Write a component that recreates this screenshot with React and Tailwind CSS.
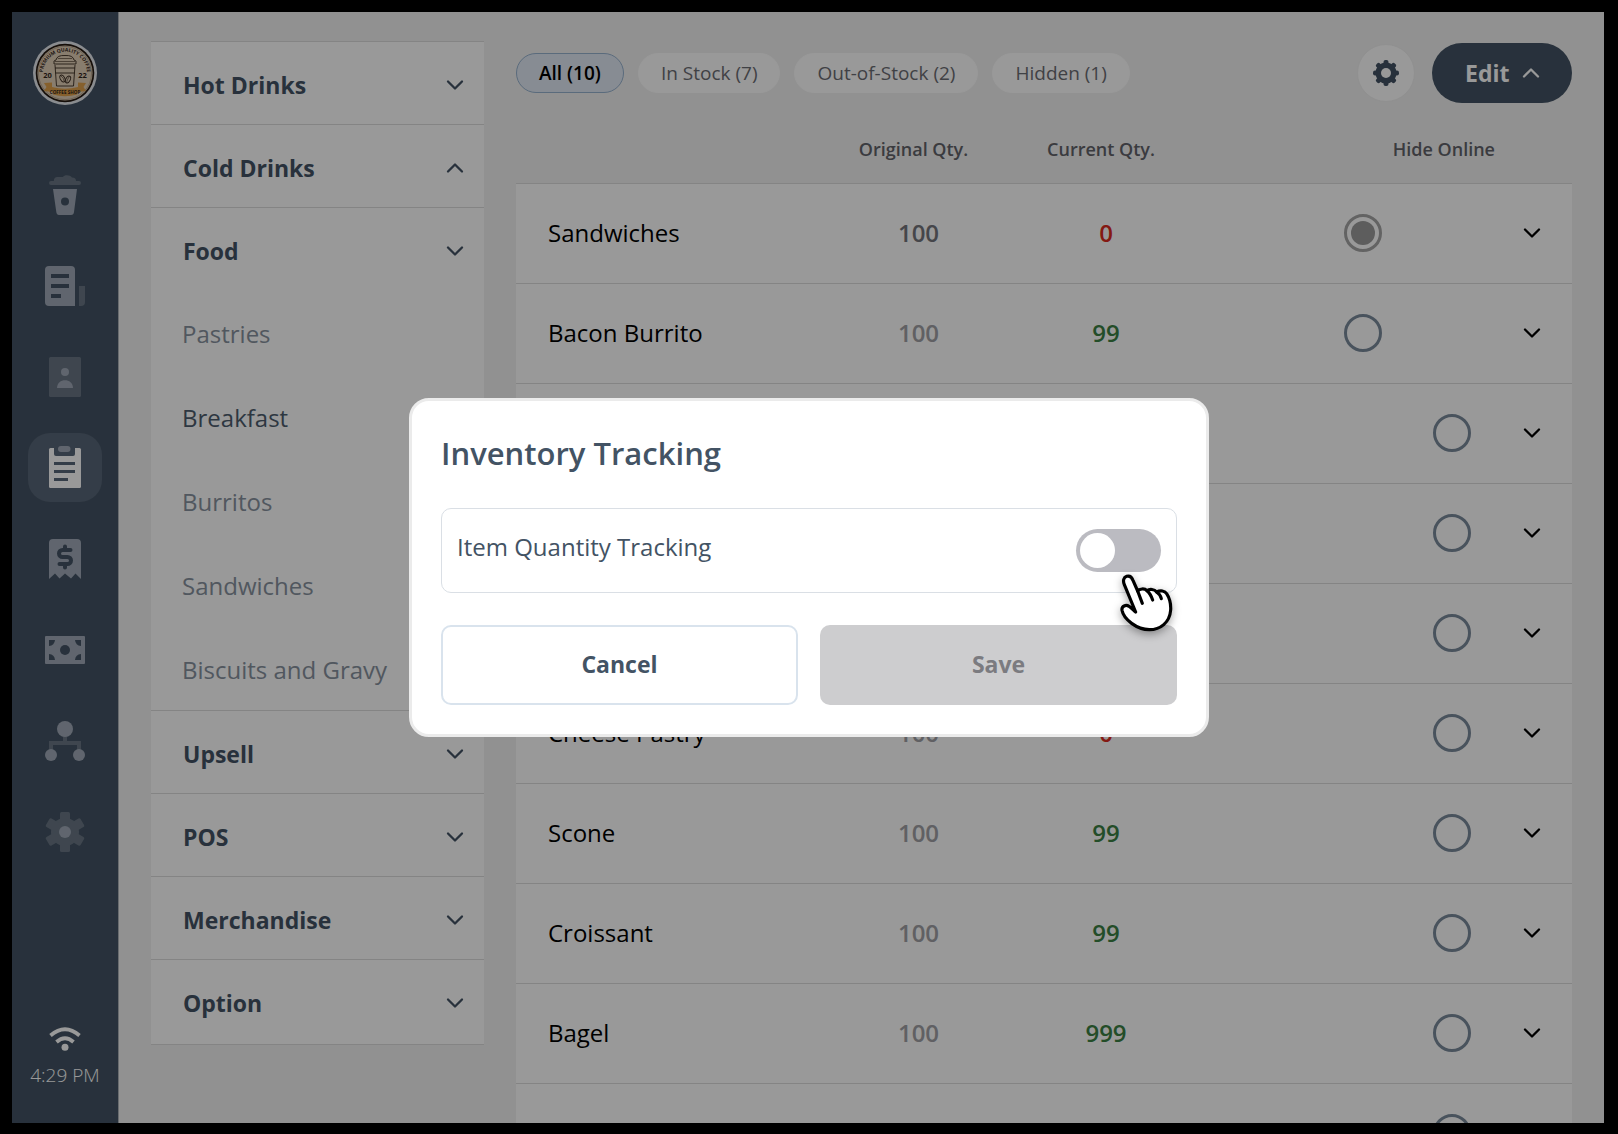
const FONT = 'font-["Open_Sans","Noto_Sans",sans-serif]';

const light = '#a0a9b7';
const dim = '#697684';
const navy = '#435364';

function NavIcon({ children }) {
  return (
    <svg viewBox="0 0 40 40" className="size-10 overflow-visible" aria-hidden="true">
      {children}
    </svg>
  );
}

const NAV = [
  {
    label: 'Orders',
    icon: (
      <NavIcon>
        <path d="M9 6 C8.500 3 11 1.500 14 2 H18 C19 -0.500 25 -0.500 27 2.500 C30 2.500 31 4 31 6 H34 a2 2 0 0 1 0 4 H6 a2 2 0 0 1 0 -4 Z" fill={dim} />
        <path d="M8 14 H32 L29 37 Q28.700 40 26 40 H14 Q11.700 40 11.300 37 Z" fill={light} />
        <circle cx="20" cy="26.500" r="4" fill={navy} />
      </NavIcon>
    ),
  },
  {
    label: 'Menu',
    icon: (
      <NavIcon>
        <path d="M34 20 H40 V36 Q40 40 36 40 H34 Z" fill={dim} />
        <path d="M4 0 H26 Q30 0 30 4 V40 H4 Q0 40 0 36 V4 Q0 0 4 0 Z" fill={light} />
        <path d="M6 8 H24 V12 H6 Z M6 18 H24 V22 H6 Z M6 28 H16 V32 H6 Z" fill={navy} />
      </NavIcon>
    ),
  },
  {
    label: 'Contacts',
    icon: (
      <NavIcon>
        <rect x="4" width="32" height="40" rx="1.500" fill={dim} />
        <circle cx="20" cy="15" r="4" fill={light} />
        <path d="M12 31 C12 20.500 28 20.500 28 31 Z" fill={light} />
      </NavIcon>
    ),
  },
  {
    label: 'Inventory',
    active: true,
    icon: (
      <NavIcon>
        <rect x="4" width="32" height="40" rx="1.500" fill="#fff" />
        <path d="M9 -1 H30 V6 Q30 8 28 8 H11 Q9 8 9 6 Z" fill="#586678" />
        <rect x="13" y="-2" width="12.500" height="6" rx="3" fill={light} />
        <path d="M9 14 H30 V17 H9 Z M9 22 H30 V25 H9 Z M9 30 H23 V33 H9 Z" fill="#586678" />
      </NavIcon>
    ),
  },
  {
    label: 'Receipts',
    icon: (
      <NavIcon>
        <path d="M8 0 H32 Q36 0 36 4 V40 L30.500 34.500 L26 39.500 L20 34.500 L14.500 39.500 L10 34.500 L4 40 V4 Q4 0 8 0 Z" fill={light} />
        <path d="M25.500 11 H17.500 a3.500 3.500 0 0 0 0 7 H22.500 a3.500 3.500 0 0 1 0 7 H14.500 M20 7.500 V11 M20 25 V28.500" fill="none" stroke={navy} strokeWidth="4" strokeLinecap="round" />
      </NavIcon>
    ),
  },
  {
    label: 'Cash',
    icon: (
      <NavIcon>
        <rect y="6" width="40" height="28" rx="1" fill={light} />
        <path d="M4 10 H10 Q9.500 15.500 4 16 Z M36 10 H30 Q30.500 15.500 36 16 Z M4 30 H10 Q9.500 24.500 4 24 Z M36 30 H30 Q30.500 24.500 36 24 Z" fill={navy} />
        <circle cx="20" cy="20" r="5" fill={navy} />
      </NavIcon>
    ),
  },
  {
    label: 'Locations',
    icon: (
      <NavIcon>
        <path d="M20 14 V22 M6 30 V22 H34 V30" fill="none" stroke={dim} strokeWidth="4" />
        <circle cx="20" cy="8" r="8" fill={light} />
        <circle cx="6" cy="34" r="6" fill={light} />
        <circle cx="34" cy="34" r="6" fill={light} />
      </NavIcon>
    ),
  },
  {
    label: 'Settings',
    icon: (
      <NavIcon>
        <g fill={dim}>
          <circle cx="20" cy="20" r="14" />
          {[0, 60, 120].map((a) => (
            <rect key={a} x="15" width="10" height="40" rx="1.500" transform={`rotate(${a} 20 20)`} />
          ))}
        </g>
        <circle cx="20" cy="20" r="6" fill={light} />
      </NavIcon>
    ),
  },
];

const CATEGORIES = [
  { name: 'Hot Drinks' },
  { name: 'Cold Drinks', up: true },
  { name: 'Food', items: ['Pastries', 'Breakfast', 'Burritos', 'Sandwiches', 'Biscuits and Gravy'] },
  { name: 'Upsell' },
  { name: 'POS' },
  { name: 'Merchandise' },
  { name: 'Option' },
];

const FILTERS = ['All (10)', 'In Stock (7)', 'Out-of-Stock (2)', 'Hidden (1)'];

const ROWS = [
  { name: 'Sandwiches', orig: '100', cur: '0', inset: true, hidden: true },
  { name: 'Bacon Burrito', orig: '100', cur: '99', inset: true },
  {},
  {},
  {},
  { name: 'Cheese Pastry', orig: '100', cur: '0' },
  { name: 'Scone', orig: '100', cur: '99' },
  { name: 'Croissant', orig: '100', cur: '99' },
  { name: 'Bagel', orig: '100', cur: '999' },
  {},
];

function Chevron({ up = false }) {
  return (
    <svg viewBox="0 0 18 12" className="h-3 w-[18px] shrink-0" fill="none" stroke="currentColor" strokeWidth="2.300" strokeLinecap="round" strokeLinejoin="round" aria-hidden="true">
      <path d={up ? 'M2 9.500 L9 2.500 L16 9.500' : 'M2 2.500 L9 9.500 L16 2.500'} />
    </svg>
  );
}

function Logo() {
  return (
    <svg viewBox="0 0 64 64" className="size-16" role="img" aria-label="Coffee Shop">
      <circle cx="32" cy="32" r="32" fill="#e6e9ef" />
      <circle cx="32" cy="32" r="29.300" fill="#24180f" />
      <circle cx="32" cy="32" r="27.600" fill="#e3d0b8" />
      <circle cx="32" cy="32" r="26.600" fill="none" stroke="#8d7a64" strokeWidth="0.500" />
      <path id="logo-arc" d="M11 40 A22.200 22.200 0 1 1 53 40" fill="none" />
      <text fontSize="5" fontWeight="700" fill="#33261b">
        <textPath href="#logo-arc" startOffset="50%" textAnchor="middle">PREMIUM QUALITY COFFEE</textPath>
      </text>
      <g fill="none" stroke="#3a2c20" strokeWidth="0.900">
        <path d="M21 23 Q20 19 23 19 Q24 14 32 14.500 Q40 14 41 19 Q44 19 43 23 Z" />
        <path d="M22 20.500 H42 M25 17.500 H39" strokeWidth="0.600" />
        <path d="M22 24 L23.500 45 H40.500 L42 24 M22 27 H42 M22.500 32 H41.500" />
        <ellipse cx="29.500" cy="37.500" rx="2.200" ry="3.700" transform="rotate(-28 29.500 37.500)" />
        <ellipse cx="35" cy="38.500" rx="2.200" ry="3.700" transform="rotate(28 35 38.500)" />
        <path d="M28 35 Q31 37 31 40 M36 36 Q34 39 33.500 41.500" strokeWidth="0.600" />
      </g>
      <path d="M11 42 L19 41.500 V46 Q32 49.500 45 46 V41.500 L53 42 L50.500 46 L53 50 L45 51 L44 53.500 Q32 57 20 53.500 L19 51 L11 50 L13.500 46 Z" fill="#e0a04a" />
      <g fontSize="7.500" fontWeight="700" fill="#33261b" textAnchor="middle">
        <text x="14.500" y="36.500">20</text>
        <text x="49.500" y="36.500">22</text>
        <text x="32" y="53" fontSize="4.600">COFFEE SHOP</text>
      </g>
    </svg>
  );
}

function Sidebar() {
  return (
    <aside className="flex w-[107px] shrink-0 flex-col items-center border-r border-[#b0b4b9] bg-[#435364] pt-[29px] pb-[34px]">
      <Logo />
      <nav className="mt-[55px] flex flex-col gap-[22px]">
        {NAV.map((n) => (
          <a
            key={n.label}
            href="#"
            aria-label={n.label}
            className={`flex h-[69px] w-[74px] items-center justify-center rounded-[22px] ${n.active ? 'bg-[#586678]' : ''}`}
          >
            {n.icon}
          </a>
        ))}
      </nav>
      <div className="mt-auto flex flex-col items-center gap-2.5 text-white">
        <svg viewBox="0 0 32 24" className="h-6 w-8" fill="none" stroke="currentColor" strokeWidth="3.800" role="img" aria-label="Wi-Fi">
          <path d="M1.500 8.500 Q16 -4 30.500 8.500" />
          <path d="M7.500 15 Q16 7.500 24.500 15" />
          <circle cx="16" cy="20.300" r="3.500" fill="currentColor" stroke="none" />
        </svg>
        <span className="text-[19px] leading-7 font-light">4:29 PM</span>
      </div>
    </aside>
  );
}

function Categories() {
  return (
    <div className="w-[333px] border-t border-[#dcdcdc] bg-white">
      {CATEGORIES.map((c) => (
        <section key={c.name} className="border-b border-[#dcdcdc] last:pb-0.5">
          <button className="flex h-[82px] w-full items-center justify-between pt-1 pr-5 pl-8 text-[23px] font-bold text-[#435364]">
            {c.name}
            <Chevron up={c.up} />
          </button>
          {c.items && (
            <ul>
              {c.items.map((i) => (
                <li key={i}>
                  <a
                    href="#"
                    className={`flex h-[84px] items-center pt-1 pl-[31px] text-2xl ${i === 'Breakfast' ? 'text-[#4d5d6d]' : 'text-[#87929e]'}`}
                  >
                    {i}
                  </a>
                </li>
              ))}
            </ul>
          )}
        </section>
      ))}
    </div>
  );
}

function Toolbar() {
  return (
    <div className="flex h-[60px] items-center">
      <div className="flex gap-3.5">
        {FILTERS.map((f, i) => (
          <button
            key={f}
            className={`h-10 rounded-full border px-[22px] text-[19px] whitespace-nowrap ${
              i === 0 ? 'border-[#96b2cf] bg-[#e2eaf5] font-semibold text-black' : 'border-white bg-white text-[#6c6d73]'
            }`}
          >
            {f}
          </button>
        ))}
      </div>
      <button aria-label="Inventory settings" className="ml-auto flex size-[58px] items-center justify-center rounded-full border border-[#f0f0f0] bg-white">
        <svg viewBox="0 0 26 26" className="size-[26px]" aria-hidden="true">
          <g fill={navy}>
            <circle cx="13" cy="13" r="10.500" />
            {[0, 45, 90, 135].map((a) => (
              <rect key={a} x="10.500" width="5" height="26" rx="2" transform={`rotate(${a} 13 13)`} />
            ))}
          </g>
          <circle cx="13" cy="13" r="5" fill="#fff" />
        </svg>
      </button>
      <button className="ml-[17px] flex h-[60px] w-[140px] items-center justify-between rounded-full bg-[#435364] pr-8 pl-[33px] text-[23px] font-bold text-white">
        Edit
        <Chevron up />
      </button>
    </div>
  );
}

function Inventory() {
  return (
    <table className="w-full table-fixed border-collapse">
      <colgroup>
        <col />
        <col className="w-[187px]" />
        <col className="w-[188px]" />
        <col className="w-[295px]" />
        <col className="w-[77px]" />
      </colgroup>
      <thead>
        <tr className="h-20 text-[18px] text-[#62636a]">
          <th aria-label="Item" />
          <th className="pt-3.5 pr-2.5 font-semibold">Original Qty.</th>
          <th className="pt-3.5 pr-2.5 font-semibold">Current Qty.</th>
          <th className="pt-3.5 text-right font-semibold">Hide Online</th>
          <th aria-label="Details" />
        </tr>
      </thead>
      <tbody>
        {ROWS.map((r, i) => (
          <tr key={i} className="h-[100px] border-t border-[#dcdcdc] bg-white text-2xl">
            <td className="pl-8 text-black">{r.name}</td>
            <td className={`text-center font-semibold ${i === 0 ? 'text-[#74757c]' : 'text-[#a0a0a5]'}`}>{r.orig}</td>
            <td className={`text-center font-semibold ${r.cur === '0' ? 'text-[#dc2b20]' : 'text-[#3b8044]'}`}>{r.cur}</td>
            <td className={`text-right ${r.inset ? 'pr-[113px]' : 'pr-6'}`}>
              <input
                type="radio"
                name={`hide-${i}`}
                defaultChecked={!!r.hidden}
                aria-label="Hide online"
                className="size-[38px] appearance-none rounded-full border-[3px] border-[#7b8b9c] bg-clip-content p-1 align-middle checked:border-[#a5a5a5] checked:bg-[#9b9b9b]"
              />
            </td>
            <td className="pr-[31px]">
              <button aria-label="Show details" className="ml-auto block text-black">
                <Chevron />
              </button>
            </td>
          </tr>
        ))}
      </tbody>
    </table>
  );
}

function HandPointer() {
  return (
    <svg
      viewBox="0 0 270 240"
      className="pointer-events-none absolute top-[159px] right-[15px] h-20 w-[90px] drop-shadow-[0_3px_4px_rgba(0,0,0,0.35)]"
      fill="#fff"
      stroke="#000"
      strokeWidth="9.500"
      strokeLinecap="round"
      strokeLinejoin="round"
      aria-hidden="true"
    >
      <path d="M104 156 L70 74 C65 62 68 52 77 49 C87 46 93 53 96 61 L110 93 C116 86 130 84 138 92 C146 86 160 87 167 96 C178 90 192 92 197 101 C206 115 210 132 209 150 C206 188 178 209 145 209 C108 209 68 178 63 151 C61 138 75 133 84 139 C91 144 97 150 104 156 Z" />
      <path d="M110 93 L124 130 M138 92 C143 96 151 108 155 120 M167 96 C174 101 179 108 181 116" fill="none" />
    </svg>
  );
}

function TrackingDialog() {
  return (
    <div role="dialog" aria-modal="true" aria-labelledby="dialog-title" className="relative w-full max-w-[800px] rounded-[20px] border-[3px] border-[#ebebeb] bg-white p-[29px]">
      <h2 id="dialog-title" className="text-[31px] leading-[46px] font-semibold text-[#435364]">Inventory Tracking</h2>
      <div className="mt-8 flex h-[85px] items-center justify-between rounded-[10px] border border-[#dadfe5] px-[15px]">
        <label htmlFor="tracking" className="pb-1.5 text-2xl text-[#435364]">Item Quantity Tracking</label>
        <input
          id="tracking"
          type="checkbox"
          role="switch"
          className="flex h-[43px] w-[85px] appearance-none items-center rounded-full bg-[#bbbbc1] p-1 before:size-[35px] before:rounded-full before:bg-white checked:justify-end checked:bg-[#435364]"
        />
      </div>
      <div className="mt-8 grid grid-cols-2 gap-[22px] text-[23px] font-bold">
        <button className="h-20 rounded-[10px] border-2 border-[#d9e3ed] text-[#435364]">Cancel</button>
        <button disabled className="h-20 rounded-[10px] bg-[#cdcdcf] text-[#7b7b80]">Save</button>
      </div>
      <HandPointer />
    </div>
  );
}

export default function App() {
  return (
    <div className={`relative h-screen overflow-hidden bg-black pt-3 pr-3.5 pb-[11px] pl-3 ${FONT}`}>
      <div className="flex h-full overflow-hidden bg-[#f2f2f2]">
        <Sidebar />
        <div className="shrink-0 px-8 pt-[29px]">
          <Categories />
        </div>
        <main className="min-w-0 flex-1 pt-[31px] pr-8">
          <Toolbar />
          <Inventory />
        </main>
      </div>
      <div className="absolute inset-0 flex items-center justify-center bg-black/40 p-4">
        <TrackingDialog />
      </div>
    </div>
  );
}
